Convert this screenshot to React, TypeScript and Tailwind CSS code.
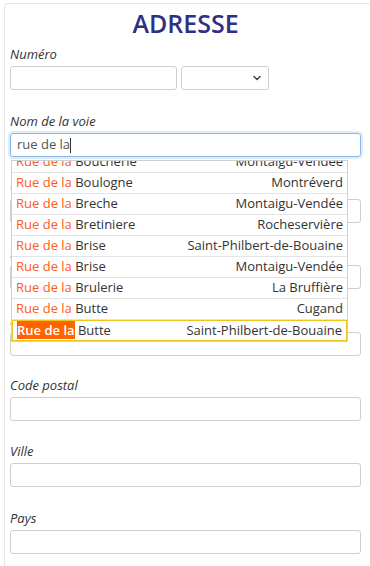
import { ChevronDown } from "lucide-react"

const suggestions = [
  { street: "Boucherie", city: "Montaigu-Vendée" },
  { street: "Boulogne", city: "Montréverd" },
  { street: "Breche", city: "Montaigu-Vendée" },
  { street: "Bretiniere", city: "Rocheservière" },
  { street: "Brise", city: "Saint-Philbert-de-Bouaine" },
  { street: "Brise", city: "Montaigu-Vendée" },
  { street: "Brulerie", city: "La Bruffière" },
  { street: "Butte", city: "Cugand" },
  { street: "Butte", city: "Saint-Philbert-de-Bouaine", active: true },
]

function Label({ children }: { children: React.ReactNode }) {
  return <label className="block text-[13px] leading-[16px] italic text-[#333] mb-[4px]">{children}</label>
}

function Input({ className = "" }: { className?: string }) {
  return <div className={`h-[24px] border border-[#cfcfcf] rounded-[3px] bg-white ${className}`} />
}

function Field({ label, gap = "mb-[22px]" }: { label: string; gap?: string }) {
  return (
    <div className={gap}>
      <Label>{label}</Label>
      <Input className="w-[351px]" />
    </div>
  )
}

export default function App() {
  return (
    <div className="h-[566px] w-[370px] overflow-hidden bg-white" style={{ fontFamily: '"Open Sans", sans-serif' }}>
      <div className="ml-[4px] mt-[3px] w-[400px] h-[600px] border-t border-l border-[#e6e6e6] rounded-tl-[4px] pt-[4px] pl-[5px]">
        <h1 className="w-[351px] text-center text-[25px] leading-[30px] font-semibold text-[#2e3086] mb-[8px]">ADRESSE</h1>

        <div className="mb-[23px]">
          <Label>Numéro</Label>
          <div className="flex gap-[4px]">
            <Input className="w-[167px]" />
            <div className="w-[88px] h-[24px] border border-[#cfcfcf] rounded-[3px] flex items-center justify-end pr-[5px]">
              <ChevronDown className="w-[12px] h-[12px] text-[#444]" strokeWidth={3} />
            </div>
          </div>
        </div>

        <div className="mb-[22px] relative">
          <Label>Nom de la voie</Label>
          <div className="w-[351px] h-[24px] border border-[#86b7e8] rounded-[3px] shadow-[0_0_0_2px_rgba(128,180,235,0.25)] flex items-center px-[6px] text-[13px] text-[#555]">
            rue de la<span className="w-px h-[15px] bg-[#333]" />
          </div>
          <div className="absolute left-[1px] top-[47px] w-[337px] h-[182px] border border-[#cfcfcf] bg-white overflow-hidden z-10">
            <div className="-mt-[9px]">
              {suggestions.map((s, i) => (
                <div
                  key={i}
                  className={`h-[21px] flex items-center justify-between px-[4px] text-[13px] text-[#333] ${
                    s.active ? "border border-[#f2c417]" : "border-b border-[#e4e4e4]"
                  }`}
                >
                  <span>
                    {s.active ? (
                      <span className="bg-[#ff6400] text-white font-semibold">Rue de la</span>
                    ) : (
                      <span className="text-[#ff5a22] font-medium">Rue de la</span>
                    )}{" "}
                    {s.street}
                  </span>
                  <span>{s.city}</span>
                </div>
              ))}
            </div>
          </div>
        </div>

        <Field label="Complément" />
        <Field label="Lieu-dit" gap="mb-[23px]" />
        <Field label="Boîte postale" gap="mb-[21px]" />
        <Field label="Code postal" />
        <Field label="Ville" gap="mb-[23px]" />
        <Field label="Pays" />
      </div>
    </div>
  )
}
